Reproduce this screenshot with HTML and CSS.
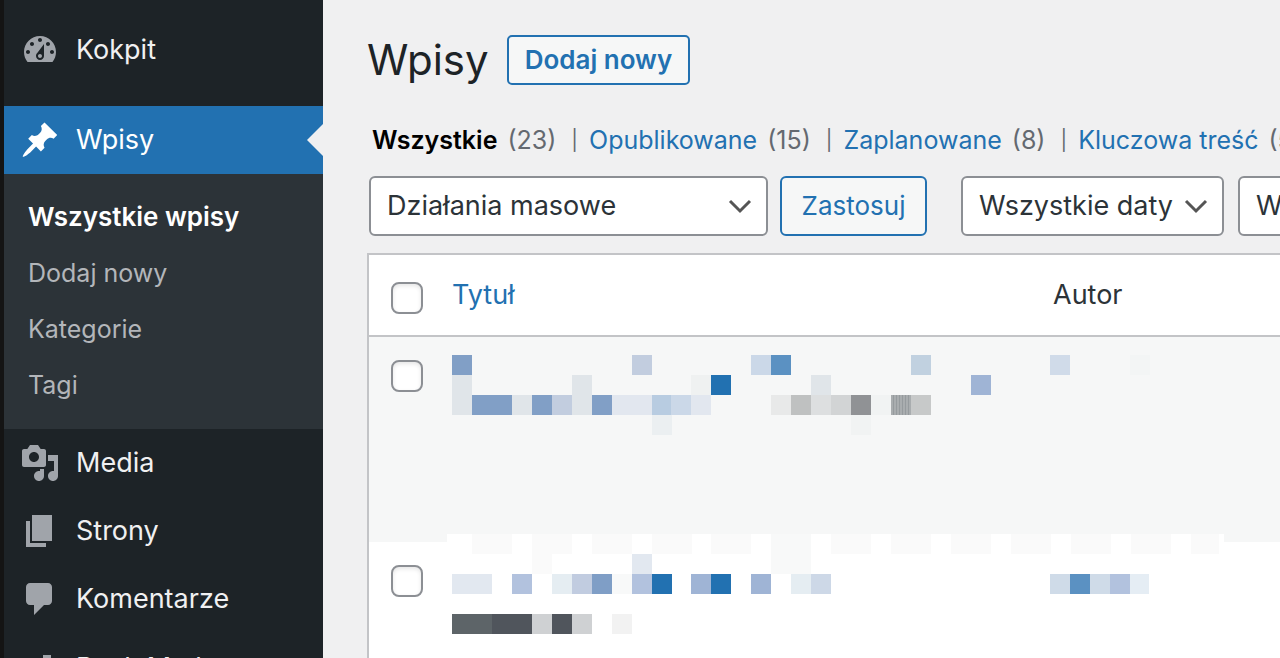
FILE: index.html
```html
<!DOCTYPE html>
<html lang="pl">
<head>
<meta charset="utf-8">
<title>Wpisy</title>
<link rel="stylesheet" href="styles.css">
</head>
<body>
<div class="layout">
  <nav class="sidebar" aria-label="Menu główne">
    <a class="item item-first" href="#"><svg class="icon" viewBox="0 0 20 20" aria-hidden="true"><path d="M3.76 16h12.48c1.1-1.37 1.76-3.11 1.76-5 0-4.42-3.58-8-8-8s-8 3.58-8 8c0 1.89.66 3.63 1.76 5zM10 4c.55 0 1 .45 1 1s-.45 1-1 1-1-.45-1-1 .45-1 1-1zM6 6c.55 0 1 .45 1 1s-.45 1-1 1-1-.45-1-1 .45-1 1-1zm8 0c.55 0 1 .45 1 1s-.45 1-1 1-1-.45-1-1 .45-1 1-1zm-5.37 5.55L12 7v6c0 1.1-.9 2-2 2s-2-.9-2-2c0-.57.24-1.08.63-1.45zM4 10c.55 0 1 .45 1 1s-.45 1-1 1-1-.45-1-1 .45-1 1-1zm12 0c.55 0 1 .45 1 1s-.45 1-1 1-1-.45-1-1 .45-1 1-1zm-5 3c0-.55-.45-1-1-1s-1 .45-1 1 .45 1 1 1 1-.45 1-1z"/></svg>Kokpit</a>
    <a class="item item-current" href="#"><svg class="icon" viewBox="0 0 20 20" aria-hidden="true"><path d="M10.44 3.02l1.82-1.82 6.36 6.35-1.83 1.82c-1.05-.68-2.48-.57-3.41.36l-.75.75c-.92.93-1.04 2.35-.35 3.41l-1.83 1.82-2.41-2.41-2.8 2.79c-.42.42-3.38 2.71-3.8 2.29s1.86-3.39 2.28-3.81l2.79-2.79L4.1 9.36l1.83-1.82c1.05.69 2.48.57 3.4-.36l.75-.75c.93-.92 1.05-2.35.36-3.41z"/></svg>Wpisy</a>
    <div class="submenu">
      <a class="sub sub-current" href="#">Wszystkie wpisy</a>
      <a class="sub" href="#">Dodaj nowy</a>
      <a class="sub" href="#">Kategorie</a>
      <a class="sub" href="#">Tagi</a>
    </div>
    <a class="item" href="#"><svg class="icon" viewBox="0 0 20 20" aria-hidden="true"><path d="M13 11V4c0-.55-.45-1-1-1h-1.67L9 1H5L3.67 3H2c-.55 0-1 .45-1 1v7c0 .55.45 1 1 1h10c.55 0 1-.45 1-1zM7 4.5c1.38 0 2.5 1.12 2.5 2.5S8.38 9.5 7 9.5 4.5 8.38 4.5 7 5.62 4.5 7 4.5zM14 6h5v10.5c0 1.38-1.12 2.5-2.5 2.5S14 17.88 14 16.5s1.12-2.5 2.5-2.5c.17 0 .34.02.5.05V9h-3V6zm-4 8.05V13h2v3.5c0 1.38-1.12 2.5-2.5 2.5S7 17.88 7 16.5 8.12 14 9.5 14c.17 0 .34.02.5.05z"/></svg>Media</a>
    <a class="item" href="#"><svg class="icon" viewBox="0 0 20 20" aria-hidden="true"><path d="M6 15V2h10v13H6zm-1 1h8v2H3V5h2v11z"/></svg>Strony</a>
    <a class="item" href="#"><svg class="icon" viewBox="0 0 20 20" aria-hidden="true"><path d="M5 2h9c1.1 0 2 .9 2 2v7c0 1.1-.9 2-2 2h-2l-5 5v-5H5c-1.1 0-2-.9-2-2V4c0-1.1.9-2 2-2z"/></svg>Komentarze</a>
    <a class="item item-last" href="#"><svg class="icon" viewBox="0 0 20 20" aria-hidden="true"><path d="M11.500 3.500h4V18h-4zM5.500 9h4v9h-4z"/></svg>Rank Math</a>
  </nav>

  <main class="content">
    <header class="heading">
      <h1 class="title">Wpisy</h1>
      <a class="add-new" href="#">Dodaj nowy</a>
    </header>

    <ul class="views">
      <li><a class="view view-current" href="#">Wszystkie</a> (23)</li>
      <li><a class="view" href="#">Opublikowane</a> (15)</li>
      <li><a class="view" href="#">Zaplanowane</a> (8)</li>
      <li><a class="view" href="#">Kluczowa treść</a> (5)</li>
    </ul>

    <form class="filters">
      <select class="select select-bulk" aria-label="Działania masowe"><option>Działania masowe</option></select>
      <button class="apply" type="button">Zastosuj</button>
      <select class="select select-dates" aria-label="Filtruj po dacie"><option>Wszystkie daty</option></select>
      <select class="select select-categories" aria-label="Filtruj po kategorii"><option>Wszystkie kategorie</option></select>
    </form>

    <table class="posts">
      <thead>
        <tr>
          <th class="check"><input class="box" type="checkbox" aria-label="Zaznacz wszystko"></th>
          <th class="col-title"><a class="sort" href="#">Tytuł</a></th>
          <th class="col-author">Autor</th>
        </tr>
      </thead>
      <tbody>
        <tr class="row row-alt">
          <td class="check"><input class="box" type="checkbox" aria-label="Zaznacz wpis 1"></td>
          <td><svg class="mosaic" width="540" height="80" viewBox="0 0 540 80" aria-hidden="true">
            <path fill="#819fc6" d="M0 0h20v20H0zM20 40h40v20H20zM80 40h20v20H80zM140 40h20v20h-20z"/>
            <path fill="#c2cddf" d="M180 0h20v20h-20zM100 40h20v20h-20z"/>
            <path fill="#e0e5e9" d="M0 20h20v40H0zM60 40h20v20H60zM120 20h20v40h-20zM359 20h20v20h-20z"/>
            <path fill="#e2e7ef" d="M160 40h40v20h-40zM239 40h20v20h-20z"/>
            <path fill="#b8cce1" d="M200 40h20v20h-20z"/>
            <path fill="#cbd8e8" d="M219 40h20v20h-20zM299 0h20v20h-20z"/>
            <path fill="#ebeff1" d="M200 60h20v20h-20z"/>
            <path fill="#eff1f1" d="M239 20h20v20h-20z"/>
            <path fill="#2271b1" d="M259 20h20v20h-20z"/>
            <path fill="#5b91c2" d="M319 0h20v20h-20z"/>
            <path fill="#c1d1e0" d="M459 0h20v20h-20z"/>
            <path fill="#9fb4d5" d="M519 20h20v20h-20z"/>
            <path fill="#e8e9e9" d="M319 40h20v20h-20z"/>
            <path fill="#bfc1c1" d="M339 40h20v20h-20z"/>
            <path fill="#dddfe0" d="M359 40h20v20h-20z"/>
            <path fill="#d2d4d5" d="M379 40h20v20h-20z"/>
            <path fill="#909295" d="M399 40h20v20h-20z"/>
            <path fill="#a9adaf" d="M439 40h20v20h-20z"/>
            <path stroke="#969b9e" d="M441.500 40v20M444.500 40v20M447.500 40v20M450.500 40v20M453.500 40v20M456.500 40v20"/>
            <path fill="#c7c9c9" d="M459 40h20v20h-20z"/>
            <path fill="#f1f3f3" d="M399 60h20v20h-20zM419 40h20v20h-20z"/>
          </svg></td>
          <td><svg class="mosaic" width="110" height="80" viewBox="0 0 110 80" aria-hidden="true">
            <path fill="#d0dbe9" d="M0 0h20v20H0z"/>
            <path fill="#f3f5f5" d="M80 0h20v20H80z"/>
          </svg></td>
        </tr>
        <tr class="row">
          <td class="check"><input class="box" type="checkbox" aria-label="Zaznacz wpis 2"></td>
          <td class="cell-tight"><svg class="mosaic" width="540" height="80" viewBox="0 0 540 80" aria-hidden="true">
            <path fill="#fff" d="M-5-20h777v20H-5z"/>
            <path fill="#fafafa" d="M20-20h40V0H20zM80-20h40V0H80zM80 0h20v20H80zM140-20h40V0h-40zM200-20h40V0h-40zM259-20h40V0h-40zM379-20h40V0h-40zM439-20h40V0h-40zM499-20h40V0h-40zM559-20h40V0h-40zM619-20h40V0h-40zM679-20h40V0h-40zM739-20h28V0h-28z"/>
            <path fill="#f8f9f9" d="M319-20h40V20h-40zM160 20h20v20h-20z"/>
            <path fill="#e2e8f0" d="M180 0h20v20h-20zM0 20h40v20H0z"/>
            <path fill="#b2c2de" d="M60 20h20v20H60zM180 20h20v20h-20z"/>
            <path fill="#e5edf2" d="M100 20h20v20h-20zM339 20h20v20h-20z"/>
            <path fill="#c1cce0" d="M120 20h20v20h-20z"/>
            <path fill="#7f9ec6" d="M140 20h20v20h-20z"/>
            <path fill="#2271b1" d="M200 20h20v20h-20zM259 20h20v20h-20z"/>
            <path fill="#9fb4d5" d="M239 20h20v20h-20zM299 20h20v20h-20z"/>
            <path fill="#cdd8e7" d="M359 20h20v20h-20z"/>
            <path fill="#5d6468" d="M0 60h40v20H0z"/>
            <path fill="#50555c" d="M40 60h40v20H40zM100 60h20v20h-20z"/>
            <path fill="#cfd1d3" d="M80 60h20v20H80zM120 60h20v20h-20z"/>
            <path fill="#f2f2f2" d="M160 60h20v20h-20z"/>
          </svg></td>
          <td class="cell-tight"><svg class="mosaic" width="110" height="80" viewBox="0 0 110 80" aria-hidden="true">
            <path fill="#cfdbe8" d="M0 20h20v20H0zM40 20h20v20H40z"/>
            <path fill="#5b91c2" d="M20 20h20v20H20z"/>
            <path fill="#b2c2de" d="M60 20h20v20H60z"/>
            <path fill="#e5edf4" d="M80 20h19v20H80z"/>
          </svg></td>
        </tr>
      </tbody>
    </table>
  </main>
</div>
</body>
</html>
```
FILE: styles.css
```css
* {
  box-sizing: border-box;
}

body {
  margin: 0;
  background: #f0f0f1;
  color: #2c3338;
  font-family: Inter, "Liberation Sans", sans-serif;
  font-size: 27px;
  line-height: 36px;
}

a {
  color: #2271b1;
  text-decoration: none;
}

.layout {
  display: flex;
  height: 100vh;
  overflow: hidden;
}

.sidebar {
  flex: 0 0 323px;
  border-left: 4px solid #141414;
  background: #1d2327;
}

.item {
  display: flex;
  align-items: center;
  gap: 16px;
  height: 68px;
  padding-left: 16px;
  color: #f0f0f1;
}

.item-first {
  margin: 16px 0 22px;
}

.item-last {
  height: 70px;
}

.item-current {
  position: relative;
  background: #2271b1;
  color: #fff;
}

.item-current::after {
  content: "";
  position: absolute;
  right: 0;
  top: 18px;
  border: 16px solid transparent;
  border-left: 0;
  border-right-color: #f0f0f1;
}

.icon {
  width: 40px;
  height: 40px;
  fill: #a0a4aa;
}

.item-current .icon {
  fill: #fff;
}

.submenu {
  padding: 15px 0 16px 24px;
  background: #2c3338;
}

.sub {
  display: block;
  padding: 10px 0;
  color: #b3b6ba;
  font-size: 25px;
}

.sub-current {
  color: #fff;
  font-size: 26px;
  font-weight: 600;
}

.content {
  flex: 1;
  min-width: 0;
  padding: 35px 0 0 44px;
}

.heading {
  display: flex;
  align-items: center;
  gap: 18px;
}

.title {
  margin: 0;
  color: #1d2327;
  font-size: 42px;
  font-weight: 400;
  line-height: 50px;
}

.add-new {
  padding: 5px 16px;
  border: 2px solid #2271b1;
  border-radius: 5px;
  background: #f6f7f7;
  font-size: 26px;
  font-weight: 600;
}

.views {
  display: flex;
  margin: 37px 0 18px;
  padding: 0 0 0 5px;
  color: #646970;
  font-size: 25px;
  white-space: nowrap;
  list-style: none;
}

.views li {
  display: flex;
  align-items: center;
  gap: 10px;
}

.views li + li::before {
  content: "|";
  margin: 0 1px 0 15px;
  font-size: 20px;
}

.view-current {
  color: #000;
  font-weight: 600;
}

.filters {
  display: flex;
}

.select,
.apply {
  flex: none;
  height: 60px;
  border: 2px solid #8c8f94;
  border-radius: 6px;
  font: inherit;
}

.select {
  margin-left: 2px;
  padding: 0 44px 0 16px;
  appearance: none;
  background: #fff url("data:image/svg+xml,%3Csvg xmlns='http://www.w3.org/2000/svg' width='24' height='16' fill='none' stroke='%23555' stroke-width='3'%3E%3Cpath d='M2 3l10 10 10-10'/%3E%3C/svg%3E") no-repeat right 14px center;
  color: #2c3338;
}

.select-bulk {
  width: 399px;
}

.select-dates {
  width: 263px;
  margin-left: 34px;
}

.select-categories {
  margin-left: 14px;
}

.apply {
  width: 147px;
  margin-left: 12px;
  padding: 0;
  border-color: #2271b1;
  background: #f6f7f7;
  color: #2271b1;
  font-size: 26px;
}

.posts {
  width: 100%;
  margin-top: 17px;
  border: 2px solid #c3c4c7;
  border-right: 0;
  border-spacing: 0;
  background: #fff;
  table-layout: fixed;
}

.posts th {
  height: 82px;
  padding: 0;
  border-bottom: 2px solid #c3c4c7;
  font-weight: 400;
  text-align: left;
}

.posts td {
  height: 205px;
  padding: 18px 0 0;
  vertical-align: top;
}

.posts .cell-tight {
  padding-top: 12px;
}

.posts .check {
  width: 83px;
  padding-left: 22px;
}

.col-title {
  width: 598px;
}

.posts .col-author {
  padding-left: 3px;
}

.posts .check .box {
  display: block;
  width: 32px;
  height: 32px;
  margin: 5px 0 0;
  appearance: none;
  border: 2px solid #8c8f94;
  border-radius: 8px;
  background: #fff;
  box-shadow: inset 0 2px 4px #0000001a;
}

.row-alt {
  background: #f6f7f7;
}

.mosaic {
  display: block;
  overflow: visible;
}
```
